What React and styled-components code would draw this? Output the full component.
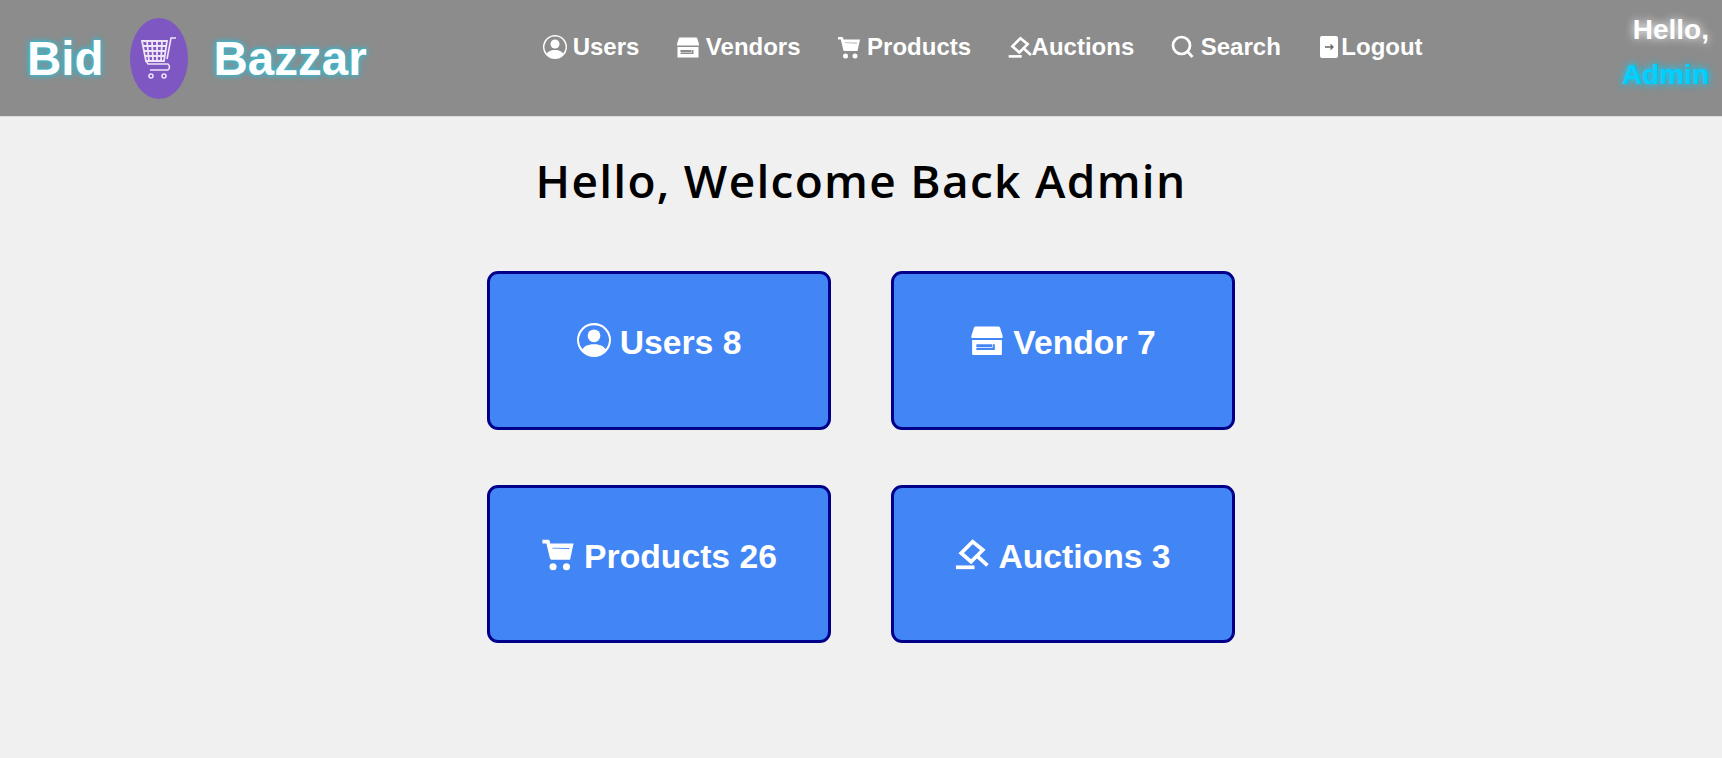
import React from "react";
import styled, { createGlobalStyle } from "styled-components";
import { BsPersonCircle } from "react-icons/bs";

const GlobalStyle = createGlobalStyle`
  html, body {
    margin: 0;
    background: #f0f0f1;
    font-family: "Liberation Sans", Arial, sans-serif;
  }
`;

const Header = styled.header`
  display: flex;
  align-items: flex-start;
  height: 116px;
  background: #8c8c8c;
  border-bottom: 1px solid #dcdcdc;
  color: #fff;
`;
const Brand = styled.div`
  display: flex;
  align-items: center;
  height: 116px;
  padding-left: 27px;
  font-size: 47.5px;
  font-weight: 700;
  text-shadow: 0 0 3px #3fb5ca, 0 0 5px #3fb5ca, 0 0 7px #3fb5ca;
`;
const Oval = styled.div`
  display: flex;
  align-items: center;
  justify-content: center;
  width: 58px;
  height: 81px;
  margin: 0 26px;
  border-radius: 50%;
  background: #7e57c2;
`;
const Nav = styled.nav`
  display: flex;
  gap: 36.5px;
  margin-left: 176px;
  padding-top: 33px;
`;
const NavLink = styled.a`
  display: flex;
  align-items: center;
  gap: ${(p) => (p.$tight ? "0" : "6px")};
  height: 28px;
  font-size: 24px;
  font-weight: 700;
  white-space: nowrap;
`;
const Greeting = styled.div`
  display: flex;
  flex-direction: column;
  align-items: flex-end;
  gap: 13px;
  margin-left: auto;
  padding: 14px 13px 0 0;
  font-size: 28px;
  line-height: 32px;
  font-weight: 700;
`;
const Hello = styled.span`
  text-shadow: 0 0 10px #fff;
`;
const Admin = styled.span`
  color: #00d0ff;
  text-shadow: 0 0 10px #00d0ff, 0 0 6px rgba(0, 208, 255, 0.5);
`;
const Main = styled.main`
  display: flex;
  flex-direction: column;
  align-items: center;
`;
const Title = styled.h1`
  margin: 33px 0 61px;
  font-family: "Open Sans", sans-serif;
  font-size: 46px;
  line-height: 60px;
  font-weight: 600;
  letter-spacing: 1.3px;
  color: #000;
`;
const Grid = styled.div`
  display: grid;
  grid-template-columns: repeat(2, 344px);
  grid-auto-rows: 158.5px;
  gap: 55px 60px;
`;
const Card = styled.a`
  display: flex;
  justify-content: center;
  align-items: flex-start;
  gap: 9px;
  box-sizing: border-box;
  padding-top: 49px;
  border: 3px solid #00008b;
  border-radius: 11px;
  background: #4285f4;
  color: #fff;
  font-size: 33.7px;
  line-height: 39px;
  font-weight: 700;
`;

const Store = ({ size }) => (
  <svg width={size} height={size} viewBox="0 0 24 24" fill="currentColor">
    <path d="M4 2.500h16q1 0 1.300 1L23 9v1.500H1V9l1.700-5.500q.3-1 1.300-1z" />
    <path
      fillRule="evenodd"
      d="M1.500 12h21v10q0 .5-.5.5H2q-.5 0-.5-.5zM4.500 15v2h11v-2zM4.500 17.500v1.500h13v-4h-1.500v2.500z"
    />
  </svg>
);

const Cart = ({ size }) => (
  <svg width={size} height={size} viewBox="0 0 24 24" fill="currentColor">
    <path
      fillRule="evenodd"
      d="M1 2h4q1 0 1.200 1l.3 1.500H23l-2.500 11.500H7.500q-1 0-1.200-1L3.800 4.500H1zM8 7.500v.6l12 .4v-.8z"
    />
    <circle cx="8.500" cy="21" r="2.500" />
    <circle cx="18" cy="21" r="2.500" />
  </svg>
);

const Gavel = ({ size }) => (
  <svg width={size} height={size} viewBox="15 35 110 100" fill="none" stroke="currentColor" strokeWidth="12">
    <path d="M72 45L105 72L67 110L35 82z" />
    <path d="M85 90L120 122" />
    <path d="M18 128H78" />
  </svg>
);

const Lens = ({ size }) => (
  <svg width={size} height={size} viewBox="0 0 24 24" fill="none" stroke="currentColor" strokeWidth="2.700">
    <circle cx="10.500" cy="10.500" r="8.500" />
    <path d="M16.500 16.500L21.500 22" />
  </svg>
);

const Exit = ({ size }) => (
  <svg width={size} height={size} viewBox="0 0 24 24">
    <rect x="3" y="1" width="18" height="22" rx="2" fill="currentColor" />
    <path d="M8 12h8M13.500 9.500L16 12l-2.500 2.500" stroke="#666" strokeWidth="1.300" fill="none" />
  </svg>
);

const LogoCart = () => (
  <svg width="36" height="42" viewBox="0 0 36 42" fill="none" stroke="#efe3f7">
    <path d="M35 1h-5l-4 21" strokeWidth="1.600" />
    <path
      d="M1 4h25l-3 20H5zM1.700 9h23.500M2.500 14h22M3.500 19h20.500M6 4l2 20M11 4l1 20M16 4v20M21 4l-1 20"
      strokeWidth="1.800"
    />
    <path d="M5 24l2 3h20q3 3 0 6H9" strokeWidth="1.500" />
    <circle cx="10" cy="39" r="2" strokeWidth="1.500" />
    <circle cx="23" cy="39" r="2" strokeWidth="1.500" />
  </svg>
);

const links = [
  { label: "Users", Icon: BsPersonCircle },
  { label: "Vendors", Icon: Store },
  { label: "Products", Icon: Cart },
  { label: "Auctions", Icon: Gavel, tight: true },
  { label: "Search", Icon: Lens },
  { label: "Logout", Icon: Exit, tight: true },
];

const cards = [
  { label: "Users 8", Icon: BsPersonCircle },
  { label: "Vendor 7", Icon: Store },
  { label: "Products 26", Icon: Cart },
  { label: "Auctions 3", Icon: Gavel },
];

export default function App() {
  return (
    <>
      <GlobalStyle />
      <Header>
        <Brand>
          Bid
          <Oval>
            <LogoCart />
          </Oval>
          Bazzar
        </Brand>
        <Nav>
          {links.map(({ label, Icon, tight }) => (
            <NavLink key={label} $tight={tight}>
              <Icon size={24} />
              {label}
            </NavLink>
          ))}
        </Nav>
        <Greeting>
          <Hello>Hello,</Hello>
          <Admin>Admin</Admin>
        </Greeting>
      </Header>
      <Main>
        <Title>Hello, Welcome Back Admin</Title>
        <Grid>
          {cards.map(({ label, Icon }) => (
            <Card key={label}>
              <Icon size={34} />
              {label}
            </Card>
          ))}
        </Grid>
      </Main>
    </>
  );
}
